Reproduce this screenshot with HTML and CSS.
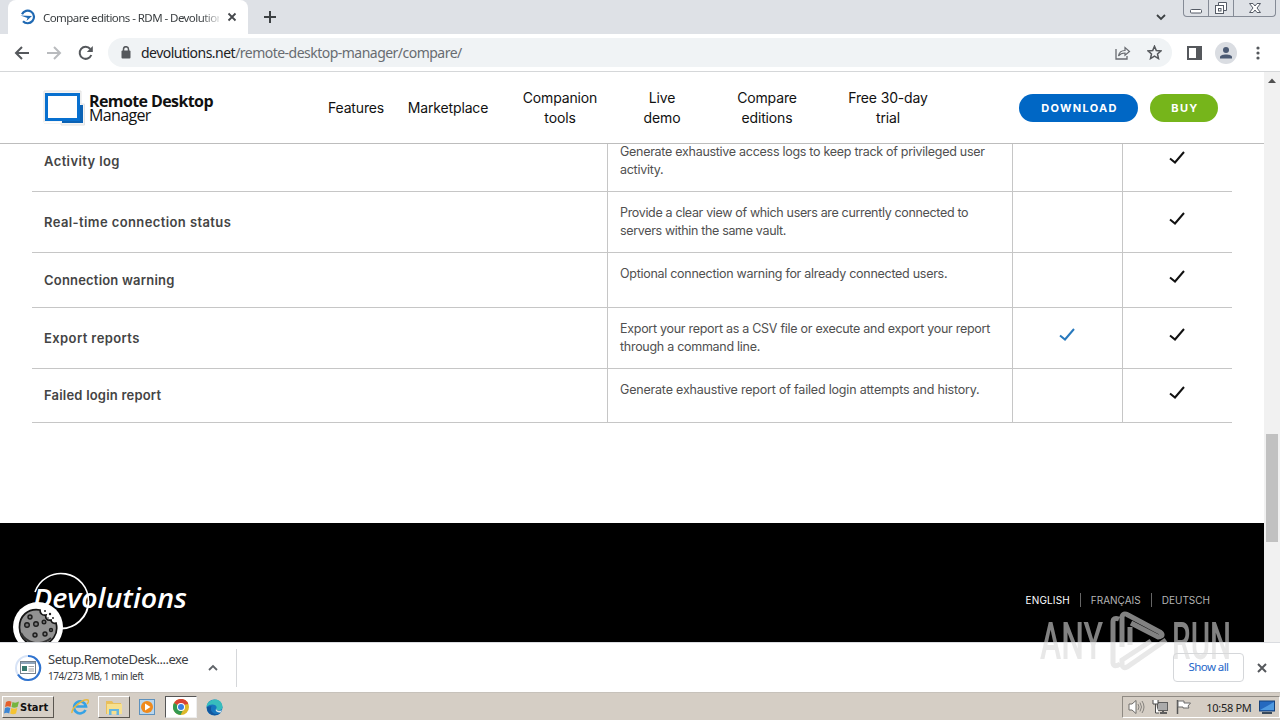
FILE: index.html
```html
<!DOCTYPE html>
<html lang="en">
<head>
    <meta charset="UTF-8">
    <meta name="viewport" content="width=device-width, initial-scale=1.0">
    <title>Compare editions - RDM - Devolutions</title>
    <link rel="stylesheet" href="styles.css">
</head>
<body>
    <!-- Browser tabs -->
    <div class="tab-strip">
        <div class="tab">
            <svg width="16" height="16" viewBox="0 0 16 16"><path d="M2 5.200A6.300 6.300 0 1 1 3 12.200" fill="none" stroke="#1f69b3" stroke-width="2.200"/><path d="M0.500 6.500L12 7L6.500 12L7.500 9Z" fill="#1f69b3"/></svg>
            <span class="tab-title">Compare editions - RDM - Devolution</span>
            <svg class="tab-close" width="10" height="10" viewBox="0 0 10 10"><path d="M1.500 1.500L8.500 8.500M8.500 1.500L1.500 8.500" stroke="#45484c" stroke-width="1.800"/></svg>
        </div>
        <svg class="new-tab" width="12" height="12" viewBox="0 0 12 12"><path d="M6 0V12M0 6H12" stroke="#3c4043" stroke-width="2"/></svg>
        <svg class="tab-search" width="10" height="7" viewBox="0 0 10 7"><path d="M1 1L5 5L9 1" fill="none" stroke="#3c4043" stroke-width="1.800"/></svg>
        <div class="window-buttons">
            <span><svg width="14" height="14" viewBox="0 0 14 14"><rect x="1.500" y="8.500" width="11" height="3.500" rx="1" fill="#fff" stroke="#555b66"/></svg></span>
            <span><svg width="14" height="14" viewBox="0 0 14 14"><path d="M4.500 4V1.500H12.500V9.500H10" fill="#fff" stroke="#555b66"/><rect x="1.500" y="4.500" width="8" height="8" fill="#fff" stroke="#555b66"/><rect x="4.500" y="7.500" width="2.500" height="2.500" fill="#fff" stroke="#555b66"/></svg></span>
            <span><svg width="14" height="14" viewBox="0 0 14 14"><path d="M1.500 2.500H5L7 5L9 2.500H12.500L9 7L12.500 11.500H9L7 9L5 11.500H1.500L5 7Z" fill="#fff" stroke="#555b66"/></svg></span>
        </div>
    </div>

    <!-- Address bar -->
    <div class="toolbar">
        <svg class="back" width="16" height="14" viewBox="0 0 16 14"><path d="M15 7H2M8 1L2 7L8 13" fill="none" stroke="#55585c" stroke-width="2"/></svg>
        <svg class="forward" width="16" height="14" viewBox="0 0 16 14"><path d="M1 7H14M8 1L14 7L8 13" fill="none" stroke="#b9bbbe" stroke-width="2"/></svg>
        <svg class="reload" width="16" height="16" viewBox="0 0 16 16"><path d="M13.300 10A6 6 0 1 1 12.300 4" fill="none" stroke="#55585c" stroke-width="2"/><path d="M14.800 1V7H8.800Z" fill="#55585c"/></svg>
        <div class="omnibox">
            <svg width="10" height="13" viewBox="0 0 10 13"><rect x="0.500" y="4.500" width="9" height="8" rx="1" fill="#55585c"/><path d="M2.500 5V3.200A2.500 2.500 0 0 1 7.500 3.200V5" fill="none" stroke="#55585c" stroke-width="1.500"/></svg>
            <span class="url"><b>devolutions.net</b>/remote-desktop-manager/compare/</span>
            <svg class="share" width="16" height="14" viewBox="0 0 16 14"><path d="M1 3V13H12V10" fill="none" stroke="#686b70" stroke-width="1.300"/><path d="M3.500 10C4 6.500 6.500 4.500 10 4.500V1.500L14.500 5.500L10 9.200V7C7 7 5 8 3.500 10Z" fill="none" stroke="#686b70" stroke-width="1.200"/></svg>
            <svg class="star" width="15" height="15" viewBox="0 0 15 15"><path d="M7.500 1.200L9.300 5.500L14 5.900L10.500 9L11.500 13.600L7.500 11.200L3.500 13.600L4.500 9L1 5.900L5.700 5.500Z" fill="none" stroke="#55585c" stroke-width="1.500"/></svg>
        </div>
        <svg class="side-panel" width="15" height="14" viewBox="0 0 15 14"><path d="M1 1H14V13H1Z" fill="none" stroke="#55585c" stroke-width="2"/><path d="M9 1H14V13H9Z" fill="#55585c"/></svg>
        <svg class="profile" width="22" height="22" viewBox="0 0 22 22"><circle cx="11" cy="11" r="11" fill="#dadde2"/><circle cx="11" cy="8" r="3" fill="#4b5a73"/><path d="M5 16.500V15C5 11.500 17 11.500 17 15V16.500Z" fill="#4b5a73"/></svg>
        <svg class="menu" width="4" height="14" viewBox="0 0 4 14"><g fill="#55585c"><circle cx="2" cy="2" r="1.600"/><circle cx="2" cy="7" r="1.600"/><circle cx="2" cy="12" r="1.600"/></g></svg>
    </div>

    <div class="viewport">
        <div class="page">
            <header>
                <a class="logo">
                    <svg width="42" height="39" viewBox="0 0 42 39"><path d="M1 3H38V16H41.500V37H18V35H1Z" fill="#f5f5f5" stroke="#e3e3e3"/><path d="M19 32H36V17H40V35H19Z" fill="#0b62b4"/><path d="M0.500 34.500H18" stroke="#fff" stroke-width="1.500"/><rect x="3.500" y="6.500" width="32" height="25" fill="#fff" stroke="#0870cf" stroke-width="3"/></svg>
                    <span class="logo-text"><b>Remote Desktop</b>Manager</span>
                </a>
                <nav>
                    <a class="features">Features</a>
                    <a class="marketplace">Marketplace</a>
                    <a class="companion">Companion<br>tools</a>
                    <a class="live">Live<br>demo</a>
                    <a class="compare">Compare<br>editions</a>
                    <a class="trial">Free 30-day<br>trial</a>
                </nav>
                <a class="btn download">DOWNLOAD</a>
                <a class="btn buy">BUY</a>
            </header>

            <div class="features-table">
                <div class="row">
                    <div class="name">Activity log</div>
                    <div class="desc">Generate exhaustive access logs to keep track of privileged user<br>activity.</div>
                    <div class="check"></div>
                    <div class="check"><svg width="16" height="13" viewBox="0 0 16 13"><path d="M1 7.500L6 11.500L15 1"/></svg></div>
                </div>
                <div class="row">
                    <div class="name">Real-time connection status</div>
                    <div class="desc tight">Provide a clear view of which users are currently connected to<br>servers within the same vault.</div>
                    <div class="check"></div>
                    <div class="check"><svg width="16" height="13" viewBox="0 0 16 13"><path d="M1 7.500L6 11.500L15 1"/></svg></div>
                </div>
                <div class="row row-single">
                    <div class="name narrow">Connection warning</div>
                    <div class="desc">Optional connection warning for already connected users.</div>
                    <div class="check"></div>
                    <div class="check"><svg width="16" height="13" viewBox="0 0 16 13"><path d="M1 7.500L6 11.500L15 1"/></svg></div>
                </div>
                <div class="row">
                    <div class="name">Export reports</div>
                    <div class="desc">Export your report as a CSV file or execute and export your report<br>through a command line.</div>
                    <div class="check free"><svg width="16" height="13" viewBox="0 0 16 13"><path d="M1 7.500L6 11.500L15 1"/></svg></div>
                    <div class="check"><svg width="16" height="13" viewBox="0 0 16 13"><path d="M1 7.500L6 11.500L15 1"/></svg></div>
                </div>
                <div class="row row-last">
                    <div class="name narrow">Failed login report</div>
                    <div class="desc loose">Generate exhaustive report of failed login attempts and history.</div>
                    <div class="check"></div>
                    <div class="check"><svg width="16" height="13" viewBox="0 0 16 13"><path d="M1 7.500L6 11.500L15 1"/></svg></div>
                </div>
            </div>

            <footer>
                <svg class="devolutions" width="164" height="60" viewBox="0 0 164 60"><path d="M6 20A27.500 27.500 0 0 1 59.500 29" fill="none" stroke="#fff" stroke-width="1.600"/><path d="M59.500 29A27.500 27.500 0 0 1 30 56.400" fill="none" stroke="#fff" stroke-width="2"/><text x="4" y="36" textLength="154" lengthAdjust="spacingAndGlyphs">Devolutions</text></svg>
                <div class="langs">
                    <a class="active">ENGLISH</a>
                    <a>FRANÇAIS</a>
                    <a>DEUTSCH</a>
                </div>
            </footer>
            <svg class="cookie" width="50" height="50" viewBox="0 0 50 50"><circle cx="25" cy="25" r="25" fill="#fff"/><path d="M27 8C15 6 6 14 6.500 26C7 39 18 45 29 43C39 41 46 32 43 21C40 22 38 20 38 18C34 19 32 16 33 13C29 14 27 11 27 8Z" fill="#929292" stroke="#161616" stroke-width="1.700"/><path d="M8 31C13 41 27 45 38 36" fill="none" stroke="#333" stroke-width="2"/><g fill="#777" stroke="#1d1d1d" stroke-width="1.400"><circle cx="17" cy="15" r="2"/><circle cx="14" cy="23" r="2.300"/><circle cx="23" cy="22" r="2.300"/><circle cx="31" cy="20" r="1.800"/><circle cx="22" cy="33" r="2"/><circle cx="32" cy="32" r="2"/><circle cx="38" cy="28" r="1.500"/></g><g fill="#222"><circle cx="32" cy="9" r="1"/><circle cx="37" cy="12" r="1.200"/><circle cx="40" cy="16" r="1"/><circle cx="35" cy="16" r=".8"/></g></svg>
        </div>
        <div class="scrollbar">
            <svg width="8" height="5" viewBox="0 0 8 5"><path d="M0 5L4 0.500L8 5Z" fill="#505050"/></svg>
            <div class="thumb"></div>
        </div>
    </div>

    <!-- Downloads -->
    <div class="shelf">
        <svg class="progress" width="28" height="28" viewBox="0 0 28 28"><circle cx="14" cy="14" r="12" fill="none" stroke="#d7e3f6" stroke-width="2"/><path d="M14 2A12 12 0 1 1 4 20.500" fill="none" stroke="#2f73cf" stroke-width="2.200"/><rect x="6.500" y="7.500" width="15" height="12" fill="#fff" stroke="#77818b"/><path d="M7 9H21" stroke="#8fa4ba" stroke-width="2"/><rect x="8" y="12" width="5" height="5" fill="#36786d"/><path d="M14.500 12.500H20M14.500 15H20M14.500 17H20" stroke="#a3a3a3"/></svg>
        <div class="download-info">
            <div class="file-name">Setup.RemoteDesk....exe</div>
            <div class="file-status">174/273 MB, 1 min left</div>
        </div>
        <svg class="chevron" width="10" height="7" viewBox="0 0 10 7"><path d="M1 6L5 2L9 6" fill="none" stroke="#5f6368" stroke-width="1.800"/></svg>
        <div class="divider"></div>
        <div class="show-all">Show all</div>
        <svg class="shelf-close" width="10" height="10" viewBox="0 0 10 10"><path d="M1 1L9 9M9 1L1 9" stroke="#55585c" stroke-width="2"/></svg>
    </div>

    <!-- Taskbar -->
    <div class="taskbar">
        <div class="start">
            <svg width="16" height="15" viewBox="0 0 16 15"><path d="M2 2Q5 0 7.500 1.800L6.500 7Q4 5.500 1 7Z" fill="#e5602b"/><path d="M8.500 2Q11.500 3.500 15 1.500L13.500 7Q10 8.500 7.500 7Z" fill="#75b43d"/><path d="M1 8Q3.500 6.500 6.300 8L5.200 13.500Q2.500 12 0 13.500Z" fill="#3d86d3"/><path d="M7.300 8Q10 9.500 13.300 8L12 13.500Q9 15 6.200 13.500Z" fill="#f5c331"/></svg>
            <span>Start</span>
        </div>
        <div class="task">
            <svg width="18" height="18" viewBox="0 0 18 18"><path d="M14.500 12A6 6 0 1 1 15 8.500H5" fill="none" stroke="#36a2e5" stroke-width="2.600"/><path d="M1 15C0 10 13 0 17 2C18 3 17 5 16 6" fill="none" stroke="#e8b83c" stroke-width="1.500"/></svg>
        </div>
        <div class="task raised">
            <svg width="18" height="17" viewBox="0 0 18 17"><path d="M1 2H7L8.500 4H16V15H1Z" fill="#e9bf5b"/><path d="M2 5H17V15H2Z" fill="#f7e08e"/><path d="M4 16V10H14V16H11.500V12H6.500V16Z" fill="#67b6df"/></svg>
        </div>
        <div class="task">
            <svg width="18" height="18" viewBox="0 0 18 18"><rect x="1.500" y="1.500" width="15" height="15" fill="#b9d6ed" stroke="#5d91bd"/><circle cx="9" cy="9" r="6" fill="#ef8a1d"/><path d="M7 5.500L12.500 9L7 12.500Z" fill="#fff"/></svg>
        </div>
        <div class="task pressed">
            <svg width="16" height="16" viewBox="0 0 16 16"><circle cx="8" cy="8" r="8" fill="#ddb92b"/><path d="M8 8L1 4A8 8 0 0 1 15 4Z" fill="#d94335"/><path d="M8 8L1 4A8 8 0 0 0 7.500 16L11 9Z" fill="#349951"/><path d="M3 4.500H15" stroke="#d94335" stroke-width="1.500"/><circle cx="8" cy="8" r="4" fill="#fff"/><circle cx="8" cy="8" r="3" fill="#397fe2"/></svg>
        </div>
        <div class="task">
            <svg width="17" height="17" viewBox="0 0 17 17"><circle cx="8.500" cy="8.500" r="8" fill="#1676bf"/><path d="M.5 8C1 -1 16 -3 16.500 8C16.500 12 11 12 10 10C13 6 5 3 .5 8Z" fill="#37bdbd"/><path d="M10 10C11 12 14 12.500 16 11L14.500 13.500C11 13.500 9 12 10 10Z" fill="#d9e9ee"/><path d="M5.500 7C3 13 9 17 14.500 14C9 19 0 15 1 8Z" fill="#12569d"/></svg>
        </div>
        <div class="tray">
            <svg width="17" height="16" viewBox="0 0 17 16"><path d="M1 5H4L8 1.500V14.500L4 11H1Z" fill="#fff" stroke="#6e6c69"/><path d="M10 5Q12 8 10 11M12 3.500Q15 8 12 12.500M14 2Q18 8 14 14" fill="none" stroke="#85827e"/></svg>
            <svg width="16" height="16" viewBox="0 0 16 16"><rect x="5.500" y="3.500" width="10" height="8" fill="#aaa" stroke="#5e5e5e"/><path d="M8 14H15M11 11V14" stroke="#5e5e5e" stroke-width="2"/><path d="M1 1V5H6V1M3.500 5V14H7" fill="#fff" stroke="#4d4d4d"/></svg>
            <svg width="16" height="16" viewBox="0 0 16 16"><path d="M1.500 1V15" stroke="#555" stroke-width="1.500"/><path d="M2 2H8V4H14.500L12 7L13 9H7V8H2Z" fill="#fff" stroke="#6b6b6b"/></svg>
            <span class="clock">10:58 PM</span>
            <svg width="16" height="14" viewBox="0 0 16 14"><rect x="0.500" y="1" width="15" height="10" fill="#2569bf" stroke="#16427a"/><path d="M1 10L15 2V10Z" fill="#4f9ae0"/><path d="M3 13H13" stroke="#394a5c" stroke-width="2"/></svg>
        </div>
    </div>

    <svg class="watermark" width="200" height="70" viewBox="0 0 200 70">
        <text x="1" y="52" textLength="63" lengthAdjust="spacingAndGlyphs">ANY</text>
        <path d="M80 12Q74 10 74 15V56Q75 61 81 57M83 40V10Q84 5 89 8L121 25Q126 29 119 30L92 16M83 15V40M91 20V38M127 33L88 60Q84 62 83 58V53L112 34"/>
        <text x="133" y="52" textLength="59" lengthAdjust="spacingAndGlyphs">RUN</text>
    </svg>
</body>
</html>
```

FILE: styles.css
```css
:root {
    --ui-font: 'Noto Sans', Tahoma, sans-serif;
    --site-font: Inter, 'Segoe UI', sans-serif;
    --line: #c6c6c6;
    --taskbar: #d5cec5;
}
* {
    box-sizing: border-box;
    margin: 0;
    padding: 0;
}
body {
    width: 1280px;
    height: 720px;
    overflow: hidden;
    position: relative;
    display: flex;
    flex-direction: column;
    background-color: #fff;
    font-family: var(--ui-font);
}
svg {
    display: block;
    flex-shrink: 0;
}
.tab-strip {
    height: 34px;
    flex-shrink: 0;
    background-color: #dee1e6;
    display: flex;
    align-items: flex-start;
    padding: 0 4px 0 8px;
}
.tab {
    width: 240px;
    height: 34px;
    background-color: #fff;
    border-radius: 8px 8px 0 0;
    display: flex;
    align-items: center;
    padding-left: 12px;
}
.tab-title {
    width: 176px;
    margin-left: 7px;
    font-size: 11.5px;
    letter-spacing: -0.56px;
    color: #3c4043;
    white-space: nowrap;
    overflow: hidden;
    -webkit-mask-image: linear-gradient(to right, #000 158px, transparent 180px);
    mask-image: linear-gradient(to right, #000 158px, transparent 180px);
}
.tab-close {
    margin-left: 8px;
}
.new-tab {
    margin: 11px 0 0 16px;
}
.tab-search {
    margin: 14px 17px 0 auto;
}
.window-buttons {
    width: 93px;
    height: 17px;
    border: 1px solid #858b96;
    border-top: none;
    border-radius: 0 0 4px 4px;
    display: grid;
    grid-template-columns: 25px 25px 1fr;
}
.window-buttons span {
    display: flex;
    align-items: center;
    justify-content: center;
    border-right: 1px solid #858b96;
}
.window-buttons span:last-child {
    border-right: none;
}
.toolbar {
    height: 38px;
    flex-shrink: 0;
    display: flex;
    align-items: center;
    border-bottom: 1px solid #d5d7d9;
    padding: 0 20px 0 14px;
}
.forward {
    margin-left: 16px;
}
.reload {
    margin-left: 16px;
}
.omnibox {
    width: 1064px;
    height: 29px;
    margin-left: 14px;
    padding: 0 10px 0 13px;
    border-radius: 15px;
    background-color: #f0f3f5;
    display: flex;
    align-items: center;
}
.omnibox + svg {
    margin-left: 15px;
}
.url {
    margin-left: 10px;
    font-size: 14px;
    letter-spacing: -0.52px;
    color: #686c71;
}
.url b {
    font-weight: normal;
    color: #202124;
}
.share {
    margin-left: auto;
}
.star {
    margin-left: 16px;
}
.profile {
    margin-left: 13px;
}
.menu {
    margin-left: auto;
}
.viewport {
    height: 570px;
    flex-shrink: 0;
    display: flex;
}
.page {
    width: 1264px;
    position: relative;
    overflow: hidden;
    font-family: var(--site-font);
}
header {
    position: relative;
    z-index: 2;
    height: 72px;
    display: flex;
    align-items: center;
    background-color: #fff;
    border-bottom: 1px solid #bdbdbd;
    padding-left: 43px;
}
.logo {
    width: 273px;
    display: flex;
    align-items: center;
    color: #111;
}
.logo-text {
    margin-left: 4px;
    font: 16px/14px 'Open Sans', sans-serif;
    letter-spacing: -0.65px;
}
.logo-text b {
    display: block;
    letter-spacing: -0.6px;
}
nav {
    width: 630px;
    display: flex;
    align-items: center;
    text-align: center;
    font-size: 14px;
    line-height: 20px;
    letter-spacing: -0.15px;
    color: #111;
}
.features {
    width: 80px;
}
.marketplace {
    width: 104px;
}
.companion {
    width: 120px;
}
.live {
    width: 84px;
}
.compare {
    width: 126px;
}
.trial {
    width: 116px;
}
.btn {
    height: 28px;
    border-radius: 14px;
    color: #fff;
    font-size: 11px;
    font-weight: 700;
    line-height: 28px;
    text-align: center;
    letter-spacing: 1.3px;
    padding-left: 2px;
}
.download {
    width: 119px;
    margin-left: 73px;
    background-color: #0067c5;
}
.buy {
    width: 68px;
    margin-left: 12px;
    background-color: #76b51b;
}
.features-table {
    width: 1200px;
    margin: -13px 0 0 32px;
}
.row {
    height: 61px;
    display: grid;
    grid-template-columns: 575px 405px 110px 110px;
    border-bottom: 1px solid var(--line);
}
.row-single {
    height: 55px;
}
.row-last {
    height: 54px;
}
.name {
    padding: 0 0 1px 12px;
    align-self: center;
    font-size: 13px;
    font-weight: 600;
    letter-spacing: 0.4px;
    color: #444;
}
.name.narrow {
    letter-spacing: 0.2px;
}
.desc {
    border-left: 1px solid var(--line);
    padding: 12px 0 0 12px;
    font-size: 12.5px;
    line-height: 18px;
    letter-spacing: -0.28px;
    color: #505050;
    white-space: nowrap;
}
.desc.tight {
    letter-spacing: -0.34px;
}
.desc.loose {
    letter-spacing: -0.19px;
}
.check {
    border-left: 1px solid var(--line);
    display: flex;
    align-items: center;
    justify-content: center;
    padding: 0 2px 7px 0;
}
.check path {
    fill: none;
    stroke: #111;
    stroke-width: 2;
}
.free path {
    stroke: #2879bd;
}
footer {
    margin-top: 100px;
    height: 119px;
    background-color: #000;
    display: flex;
    justify-content: space-between;
    align-items: flex-start;
    padding: 49px 54px 0 29px;
}
.devolutions text {
    font: italic 600 27px 'Open Sans', sans-serif;
    fill: #fff;
}
.langs {
    margin-top: 21px;
    display: flex;
    font-size: 10px;
    line-height: 14px;
    color: #b5b5b5;
}
.langs a + a {
    margin-left: 10px;
    padding-left: 10px;
    border-left: 1px solid #666;
}
.langs .active {
    color: #fff;
    letter-spacing: 0.15px;
}
/* cookie consent badge */
.cookie {
    position: absolute;
    left: 13px;
    top: 530px;
}
.scrollbar {
    width: 16px;
    background-color: #f1f1f1;
    padding: 6px 2px 0;
}
.scrollbar svg {
    margin: 0 auto;
}
.thumb {
    width: 12px;
    height: 108px;
    margin-top: 351px;
    background-color: #c1c1c1;
}
.shelf {
    height: 50px;
    flex-shrink: 0;
    border-top: 1px solid #dadce0;
    display: flex;
    align-items: center;
    padding-right: 13px;
}
.progress {
    margin-left: 14px;
}
.download-info {
    width: 166px;
    margin-left: 6px;
    color: #3c4043;
    white-space: nowrap;
}
.file-name {
    font-size: 13px;
    line-height: 17px;
    letter-spacing: -0.48px;
}
.file-status {
    font-size: 10px;
    line-height: 16px;
    letter-spacing: -0.47px;
}
.chevron {
    margin-left: -6px;
}
.divider {
    width: 1px;
    height: 38px;
    margin-left: 18px;
    background-color: #d5d7da;
}
.show-all {
    width: 71px;
    height: 29px;
    margin-left: auto;
    border: 1px solid #d5d7da;
    border-radius: 4px;
    font-size: 11.5px;
    letter-spacing: -0.6px;
    line-height: 25px;
    text-align: center;
    color: #2667c9;
}
.shelf-close {
    margin-left: 13px;
}
.taskbar {
    height: 28px;
    flex-shrink: 0;
    background-color: var(--taskbar);
    border-top: 1px solid #c7c2bb;
    display: flex;
    align-items: center;
    padding: 1px 0 0 2px;
}
.start {
    width: 52px;
    height: 22px;
    padding-left: 1px;
    border: 1px solid;
    border-color: #fff #5a5650 #5a5650 #fff;
    display: flex;
    align-items: center;
    font: bold 11px 'DejaVu Sans Condensed', sans-serif;
    color: #111;
}
.start + .task {
    margin-left: 10px;
}
.task {
    width: 32px;
    height: 22px;
    margin-right: 1.500px;
    display: flex;
    align-items: center;
    justify-content: center;
}
.raised {
    border: 1px solid;
    border-color: #fff #5a5650 #5a5650 #fff;
}
.pressed {
    background-color: #fff;
    border: 1px solid;
    border-color: #555 #eee #eee #555;
}
.tray {
    width: 158px;
    height: 22px;
    margin-left: auto;
    border: 1px solid;
    border-color: #8f8a83 #fff #fff #8f8a83;
    display: flex;
    align-items: center;
    justify-content: space-between;
    padding: 0 4px 0 5px;
}
.clock {
    font-size: 11px;
    letter-spacing: -0.3px;
    color: #222;
    margin-left: 7px;
}
.watermark {
    position: absolute;
    left: 1039px;
    top: 607px;
    z-index: 5;
    opacity: 0.6;
    pointer-events: none;
}
.watermark text {
    font: 500 52px Roboto, sans-serif;
    fill: #d9d9d9;
}
.watermark path {
    fill: none;
    stroke: #d9d9d9;
    stroke-width: 5;
}
```
